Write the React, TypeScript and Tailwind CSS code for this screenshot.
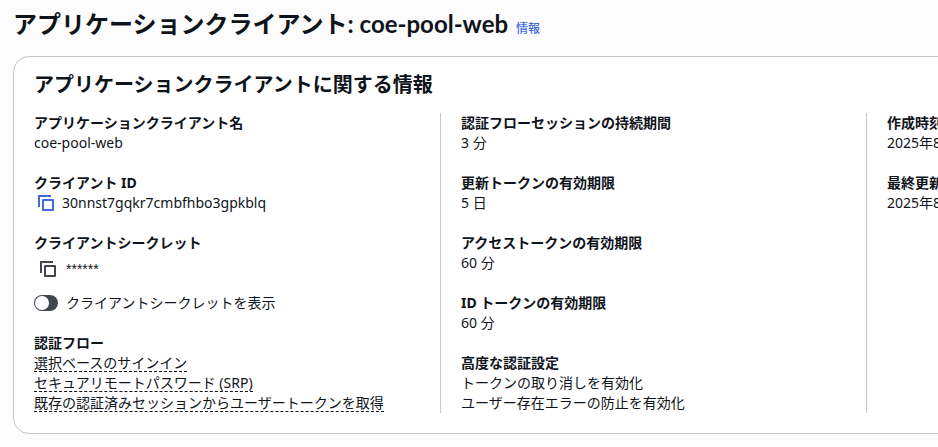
import type { ReactNode } from "react";

function CopyIcon() {
  return (
    <svg viewBox="0 0 16 16" className="size-4" fill="none" stroke="currentColor" strokeWidth="2" aria-hidden="true">
      <path d="M1 12V1H13" />
      <path d="M5 5H15V15H5Z" strokeLinejoin="round" />
    </svg>
  );
}

function Field({ label, children }: { label: string; children: ReactNode }) {
  return (
    <div>
      <dt className="font-bold">{label}</dt>
      <dd>{children}</dd>
    </div>
  );
}

function Column({ divided, children }: { divided?: boolean; children: ReactNode }) {
  return (
    <dl className={divided ? "flex flex-col gap-5 border-l border-[#c6c6cd] px-5" : "flex flex-col gap-5 px-5"}>
      {children}
    </dl>
  );
}

const authFlows = [
  "選択ベースのサインイン",
  "セキュアリモートパスワード (SRP)",
  "既存の認証済みセッションからユーザートークンを取得",
];

export default function App() {
  return (
    <main className="min-h-screen overflow-hidden bg-[#fcfcfd] px-[13px] pt-[9px] pb-3 font-['Noto_Sans','Noto_Sans_CJK_JP',sans-serif] text-sm leading-5 text-[#0f141a]">
      <header className="flex items-baseline gap-2">
        <h1 className="font-['Lato','Noto_Sans_CJK_JP',sans-serif] text-2xl leading-[30px] font-bold whitespace-nowrap">アプリケーションクライアント: coe-pool-web</h1>
        <a href="#info" className="text-xs font-medium text-[#4169e1]">情報</a>
      </header>

      <section className="mt-[17px] min-w-[1280px] rounded-2xl border border-[#c6c6cd] bg-white pt-4 pb-5">
        <h2 className="px-5 text-xl leading-6 font-bold">アプリケーションクライアントに関する情報</h2>
        <div className="mt-4 grid grid-cols-3">
          <Column>
            <Field label="アプリケーションクライアント名">coe-pool-web</Field>
            <Field label="クライアント ID">
              <div className="flex items-center gap-2 pl-1">
                <button type="button" aria-label="コピー" className="text-[#4169e1]"><CopyIcon /></button>
                <span>30nnst7gqkr7cmbfhbo3gpkblq</span>
              </div>
            </Field>
            <Field label="クライアントシークレット">
              <div className="flex h-8 items-center gap-[10px] pl-[6px]">
                <button type="button" aria-label="コピー" className="text-[#424650]"><CopyIcon /></button>
                <span className="font-['Liberation_Sans',sans-serif]">******</span>
              </div>
              <label className="mt-2 flex items-center gap-2">
                <input
                  type="checkbox"
                  role="switch"
                  className="h-4 w-6 appearance-none rounded-full bg-[#424650] p-px before:block before:size-[14px] before:rounded-full before:bg-white checked:bg-[#4169e1] checked:before:ml-2"
                />
                クライアントシークレットを表示
              </label>
            </Field>
            <Field label="認証フロー">
              {authFlows.map((flow) => (
                <div key={flow} className="h-5">
                  <button type="button" className="block h-[19px] border-b border-dashed border-[#0f141a] leading-5 whitespace-nowrap">
                    {flow}
                  </button>
                </div>
              ))}
            </Field>
          </Column>
          <Column divided>
            <Field label="認証フローセッションの持続期間">3 分</Field>
            <Field label="更新トークンの有効期限">5 日</Field>
            <Field label="アクセストークンの有効期限">60 分</Field>
            <Field label="ID トークンの有効期限">60 分</Field>
            <Field label="高度な認証設定">
              <div>トークンの取り消しを有効化</div>
              <div>ユーザー存在エラーの防止を有効化</div>
            </Field>
          </Column>
          <Column divided>
            <Field label="作成時刻">2025年8月</Field>
            <Field label="最終更新">2025年8月</Field>
          </Column>
        </div>
      </section>
    </main>
  );
}
